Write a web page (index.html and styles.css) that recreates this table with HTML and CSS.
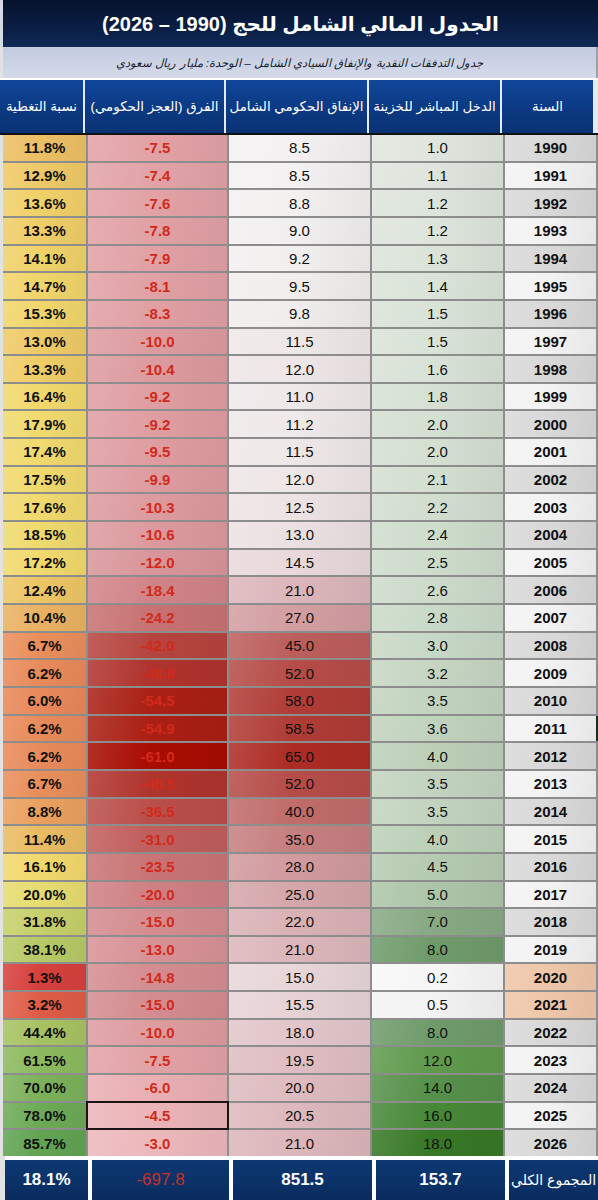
FILE: index.html
```html
<!DOCTYPE html>
<html lang="ar" dir="rtl">
<head>
    <meta charset="UTF-8">
    <meta name="viewport" content="width=device-width, initial-scale=1.0">
    <title>الجدول المالي الشامل للحج</title>
    <link rel="stylesheet" href="styles.css">
</head>
<body>
    <div class="sheet">
        <div class="title">الجدول المالي الشامل للحج (1990 – 2026)</div>
        <div class="subtitle">جدول التدفقات النقدية والإنفاق السيادي الشامل – الوحدة: مليار ريال سعودي</div>
        <div class="head-row">
            <div class="head-cell">السنة</div>
            <div class="head-cell">الدخل المباشر للخزينة</div>
            <div class="head-cell">الإنفاق الحكومي الشامل</div>
            <div class="head-cell">الفرق (العجز الحكومي)</div>
            <div class="head-cell">نسبة التغطية</div>
        </div>
        <div class="rows" id="rows"></div>
        <div class="total-row">
            <div class="total-cell total-label">المجموع الكلي</div>
            <div class="total-cell">153.7</div>
            <div class="total-cell">851.5</div>
            <div class="total-cell neg">-697.8</div>
            <div class="total-cell">18.1%</div>
        </div>
    </div>

    <script>
        // year, income, spending, coverage %
        const data = [
            [1990, 1.0, 8.5, 11.8], [1991, 1.1, 8.5, 12.9], [1992, 1.2, 8.8, 13.6],
            [1993, 1.2, 9.0, 13.3], [1994, 1.3, 9.2, 14.1], [1995, 1.4, 9.5, 14.7],
            [1996, 1.5, 9.8, 15.3], [1997, 1.5, 11.5, 13.0], [1998, 1.6, 12.0, 13.3],
            [1999, 1.8, 11.0, 16.4], [2000, 2.0, 11.2, 17.9], [2001, 2.0, 11.5, 17.4],
            [2002, 2.1, 12.0, 17.5], [2003, 2.2, 12.5, 17.6], [2004, 2.4, 13.0, 18.5],
            [2005, 2.5, 14.5, 17.2], [2006, 2.6, 21.0, 12.4], [2007, 2.8, 27.0, 10.4],
            [2008, 3.0, 45.0, 6.7], [2009, 3.2, 52.0, 6.2], [2010, 3.5, 58.0, 6.0],
            [2011, 3.6, 58.5, 6.2], [2012, 4.0, 65.0, 6.2], [2013, 3.5, 52.0, 6.7],
            [2014, 3.5, 40.0, 8.8], [2015, 4.0, 35.0, 11.4], [2016, 4.5, 28.0, 16.1],
            [2017, 5.0, 25.0, 20.0], [2018, 7.0, 22.0, 31.8], [2019, 8.0, 21.0, 38.1],
            [2020, 0.2, 15.0, 1.3], [2021, 0.5, 15.5, 3.2], [2022, 8.0, 18.0, 44.4],
            [2023, 12.0, 19.5, 61.5], [2024, 14.0, 20.0, 70.0], [2025, 16.0, 20.5, 78.0],
            [2026, 18.0, 21.0, 85.7]
        ];

        const incomeScale = [[0.2, '#f7f7f7'], [0.5, '#f3f3f3'], [1.0, '#e0e6de'], [2.0, '#d4e0d2'],
            [3.0, '#c8d8c6'], [4.0, '#bcd0b8'], [5.0, '#adc5a9'], [7.0, '#88a984'], [8.0, '#6f9b6b'],
            [12.0, '#5f9a4c'], [14.0, '#56904a'], [16.0, '#478838'], [18.0, '#377826']];
        const spendScale = [[8.5, '#f3f1f1'], [12.0, '#eee6e7'], [15.0, '#e8d6d8'], [21.0, '#dcb6ba'],
            [27.0, '#d29ea2'], [35.0, '#c67f80'], [40.0, '#c06c6a'], [45.0, '#bc5e5c'],
            [52.0, '#b64c48'], [58.0, '#b03c36'], [65.0, '#ac2c24']];
        const diffScale = [[3.0, '#ecb8bc'], [6.0, '#e9afb3'], [7.5, '#e2a2a6'], [10.0, '#dd9ca0'],
            [15.0, '#d48c90'], [20.0, '#cf8084'], [24.2, '#c87272'], [31.0, '#c05e5c'],
            [36.5, '#ba4e4a'], [42.0, '#b6443e'], [48.5, '#b0342e'], [54.5, '#aa2014'], [61.0, '#a80c02']];
        const coverScale = [[1.3, '#d6403c'], [3.2, '#df5c46'], [6.0, '#e8885a'], [8.8, '#eaa05e'],
            [10.4, '#e9b262'], [11.8, '#ebbf64'], [13.6, '#f0d068'], [16.0, '#f2d86c'],
            [18.5, '#efda6e'], [20.0, '#e6dc70'], [31.8, '#c6d06a'], [38.1, '#b6c966'],
            [44.4, '#a7c262'], [61.5, '#8cba5e'], [70.0, '#7cb15a'], [78.0, '#6caa56'], [85.7, '#60a452']];

        function hexToRgb(hex) {
            const n = parseInt(hex.slice(1), 16);
            return [(n >> 16) & 255, (n >> 8) & 255, n & 255];
        }

        function scaleColor(stops, v) {
            if (v <= stops[0][0]) return stops[0][1];
            for (let i = 1; i < stops.length; i++) {
                if (v <= stops[i][0]) {
                    const t = (v - stops[i - 1][0]) / (stops[i][0] - stops[i - 1][0]);
                    const a = hexToRgb(stops[i - 1][1]);
                    const b = hexToRgb(stops[i][1]);
                    const c = a.map((x, k) => Math.round(x + (b[k] - x) * t));
                    return `rgb(${c[0]}, ${c[1]}, ${c[2]})`;
                }
            }
            return stops[stops.length - 1][1];
        }

        function addCell(parent, cls, text, color) {
            const cell = document.createElement('div');
            cell.className = 'cell ' + cls;
            cell.textContent = text;
            if (color) cell.style.backgroundColor = color;
            parent.appendChild(cell);
            return cell;
        }

        const rows = document.getElementById('rows');

        data.forEach(([year, income, spend, cover], i) => {
            const diff = income - spend;
            let yearCls = 'year';
            if (i % 2 === 1) yearCls += ' alt';
            if (year === 2020 || year === 2021) yearCls += ' covid';
            if (year === 2011) yearCls += ' marked';

            addCell(rows, yearCls, year);
            addCell(rows, 'income', income.toFixed(1), scaleColor(incomeScale, income));
            addCell(rows, 'spend', spend.toFixed(1), scaleColor(spendScale, spend));
            const d = addCell(rows, 'diff', diff.toFixed(1), scaleColor(diffScale, -diff));
            if (year === 2025) d.classList.add('selected');
            addCell(rows, 'cover', cover.toFixed(1) + '%', scaleColor(coverScale, cover));
        });
    </script>
</body>
</html>
```

FILE: styles.css
```css
* {
    box-sizing: border-box;
}

body {
    margin: 0;
    background-color: #ffffff;
    font-family: "Liberation Sans", "DejaVu Sans", sans-serif;
}

.sheet {
    width: 598px;
    background-color: #e2e2e2;
}

.title {
    height: 47px;
    border-left: 3px solid #d6dae2;
    background: linear-gradient(#07122c, #0b2049 70%, #0e2a58);
    color: #ffffff;
    font-size: 20px;
    font-weight: bold;
    display: flex;
    align-items: center;
    justify-content: center;
}

.subtitle {
    width: 595px;
    height: 31px;
    border-right: 2px solid #9ba1aa;
    background: linear-gradient(#c3cbdf, #d4daea);
    color: #1b1f2e;
    font-size: 11.6px;
    font-style: italic;
    display: flex;
    align-items: center;
    justify-content: center;
}

.head-row {
    width: 598px;
    height: 57px;
    display: grid;
    grid-template-columns: 91px 131px 141px 139px 83px;
    gap: 2px;
    padding: 0 5px 0 0;
    border-top: 2px solid #ffffff;
    border-bottom: 2px solid #111111;
    background-color: #e4ebf5;
}

.head-cell {
    background: linear-gradient(#10469a, #0b3880 60%, #0a3374);
    color: #ffffff;
    font-size: 13.4px;
    white-space: nowrap;
    display: flex;
    align-items: center;
    justify-content: center;
}

.rows {
    width: 595px;
    height: 1021px;
    display: grid;
    grid-template-columns: 91px 131px 141px 139px 83px;
    grid-template-rows: repeat(37, 1fr);
    gap: 2px;
    padding-right: 2px;
    background-color: #8d8d8d;
}

.cell {
    direction: ltr;
    display: flex;
    align-items: center;
    justify-content: center;
    font-size: 15px;
    color: #111111;
    background-image: linear-gradient(100deg, rgba(255, 255, 255, 0.14), rgba(255, 255, 255, 0) 45%, rgba(0, 0, 0, 0.05));
}

.year {
    font-weight: bold;
    background-color: #d9d9d9;
}
.year.alt {
    background-color: #f3f3f3;
}
.year.covid {
    background-color: #efc6a9;
}
.year.marked {
    box-shadow: 2px 0 0 #14301a;
}

.cover {
    font-weight: bold;
}

.diff {
    font-weight: bold;
    color: #d22a1a;
}
.diff.selected {
    outline: 2px solid #1c1414;
    outline-offset: 0;
    position: relative;
    z-index: 1;
}

.total-row {
    width: 593px;
    height: 44px;
    display: grid;
    grid-template-columns: 89px 129px 139px 137px 83px;
    gap: 4px;
    padding-top: 4px;
    background-color: #ffffff;
}

.total-cell {
    direction: ltr;
    background: linear-gradient(#0d3873, #0a2c5e);
    color: #ffffff;
    font-size: 17px;
    font-weight: bold;
    display: flex;
    align-items: center;
    justify-content: center;
}

.total-cell.neg {
    color: #c8302a;
    font-weight: normal;
}

.total-label {
    direction: rtl;
    font-size: 14px;
    font-weight: normal;
}
```
